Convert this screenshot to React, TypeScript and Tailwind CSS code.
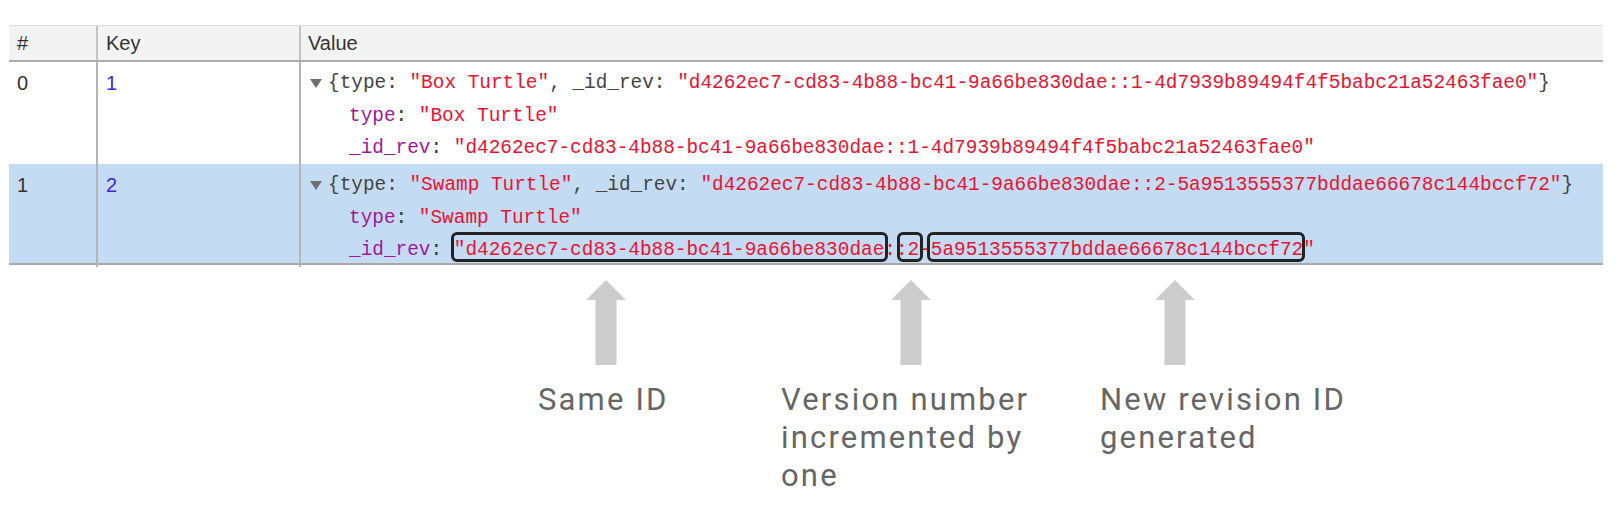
const mono = "font-['Liberation_Mono',monospace] text-[19.4px] leading-[32.5px] whitespace-nowrap";
const sans = "font-['Liberation_Sans',Arial,sans-serif] text-[20px]";

const ID1 = "d4262ec7-cd83-4b88-bc41-9a66be830dae::1-4d7939b89494f4f5babc21a52463fae0";
const ID2 = "d4262ec7-cd83-4b88-bc41-9a66be830dae::2-5a9513555377bddae66678c144bccf72";

function Caret() {
  return (
    <svg width="12" height="9" viewBox="0 0 12 9" className="mr-[6px] inline-block align-middle">
      <polygon points="0,0 12,0 6,9" fill="#6f6f6f" />
    </svg>
  );
}

function Str({ children }: { children: React.ReactNode }) {
  return <span className="text-[#ec1230]">{children}</span>;
}

function Prop({ name }: { name: string }) {
  return (
    <>
      <span className="text-[#a1179a]">{name}</span>
      <span className="text-[#333]">: </span>
    </>
  );
}

function Mark({ className }: { className: string }) {
  return <span className={"absolute top-[-2px] h-[30px] rounded-[6px] border-[3px] border-[#232323] " + className} />;
}

function ValueCell({ type, id, marked }: { type: string; id: string; marked?: boolean }) {
  return (
    <div className={mono + " pl-[9px] pt-[5px]"}>
      <div className="flex items-center">
        <Caret />
        <span className="text-[#444]">
          {"{type: "}
          <Str>"{type}"</Str>
          {", _id_rev: "}
          <Str>"{id}"</Str>
          {"}"}
        </span>
      </div>
      <div className="ml-[39px]">
        <Prop name="type" />
        <Str>"{type}"</Str>
      </div>
      <div className="relative ml-[39px]">
        <Prop name="_id_rev" />
        <Str>"{id}"</Str>
        {marked && (
          <>
            <Mark className="left-[8.73ch] w-[37.62ch]" />
            <Mark className="left-[47.12ch] w-[2.23ch]" />
            <Mark className="left-[49.67ch] w-[32.45ch]" />
          </>
        )}
      </div>
    </div>
  );
}

function Row({ index, k, type, id, selected, height, last }: {
  index: number; k: number; type: string; id: string; selected?: boolean; height: string; last?: boolean;
}) {
  return (
    <div
      className={
        "grid grid-cols-[89px_203px_1fr] " +
        height +
        (selected ? " bg-[#c3dcf3]" : " bg-white") +
        (last ? " border-b-2 border-[#a9a9a9]" : "")
      }
    >
      <div className={sans + " border-r-2 border-[#b4b4b4] pl-[8px] pt-[5px] leading-[32.5px] text-[#333]"}>{index}</div>
      <div className={sans + " border-r-2 border-[#b4b4b4] pl-[8px] pt-[5px] leading-[32.5px] text-[#4326d8]"}>{k}</div>
      <ValueCell type={type} id={id} marked={selected} />
    </div>
  );
}

function Arrow({ className }: { className: string }) {
  return (
    <svg width="40" height="85" viewBox="0 0 40 85" className={"block " + className}>
      <polygon points="20,0 40,20 30.5,20 30.5,85 9.5,85 9.5,20 0,20" fill="#cccccc" />
    </svg>
  );
}

function Note({ lines, arrow, width }: { lines: string[]; arrow: string; width: string }) {
  return (
    <div className={width}>
      <Arrow className={arrow} />
      <div className="mt-[16px] font-['Roboto',sans-serif] text-[31px] leading-[38px] tracking-[0.07em] text-[#666666] whitespace-nowrap">
        {lines.map((l) => (
          <div key={l}>{l}</div>
        ))}
      </div>
    </div>
  );
}

export default function App() {
  return (
    <div className="h-[511px] w-[1622px] overflow-hidden bg-white pl-[9px] pt-[25px]">
      <div className="w-[1594px]">
        <div className={"grid h-[37px] grid-cols-[89px_203px_1fr] border-t border-b-2 border-t-[#dddddd] border-b-[#adadad] bg-[#f3f3f3] text-[#333] " + sans}>
          <div className="flex items-center border-r-2 border-[#c4c4c4] pl-[8px]">#</div>
          <div className="flex items-center border-r-2 border-[#c4c4c4] pl-[8px]">Key</div>
          <div className="flex items-center pl-[7px]">Value</div>
        </div>
        <Row index={0} k={1} type="Box Turtle" id={ID1} height="h-[102px]" />
        <Row index={1} k={2} type="Swamp Turtle" id={ID2} height="h-[101px]" selected last />
      </div>

      <div className="mt-[15px] flex pl-[529px]">
        <Note width="w-[243px]" arrow="ml-[48px]" lines={["Same ID"]} />
        <Note width="w-[319px]" arrow="ml-[110px]" lines={["Version number", "incremented by", "one"]} />
        <Note width="w-[300px]" arrow="ml-[55px]" lines={["New revision ID", "generated"]} />
      </div>
    </div>
  );
}
